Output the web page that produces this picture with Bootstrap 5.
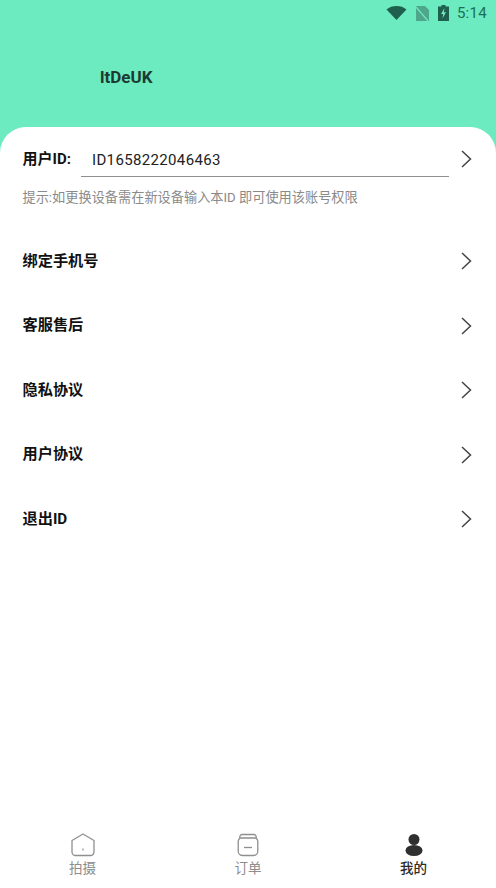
<!DOCTYPE html>
<html lang="zh">
<head>
<meta charset="utf-8">
<link href="https://cdn.jsdelivr.net/npm/bootstrap@5.3.0/dist/css/bootstrap.min.css" rel="stylesheet">
<style>
html,body{height:100%}
body{background:#6cebc0;font-family:"Roboto","Noto Sans CJK SC",sans-serif;color:#111;overflow:hidden}
.phone{height:888px}
.statusrow{height:26px;padding-right:9px;gap:9px;color:#1d6f58;font-size:15px;letter-spacing:.3px}
.statusrow svg{display:block}
.statusrow .batt{margin-right:-1px}
.hero{height:101px;padding-left:100px;padding-top:40px;font-size:17px;font-weight:700;line-height:22px;color:#1d3b33}
.sheet{background:#fff;border-radius:26px 26px 0 0;flex:1 1 auto;min-height:0}
.uidrow{padding:18px 24px 0 22.500px;height:51px}
.uidlabel{font-size:15px;font-weight:700;width:58.500px;line-height:28px;white-space:nowrap}
.uidval{flex:1;border-bottom:1px solid #8f8f8f;font-size:15px;line-height:22px;padding:0 0 6px 11px;height:28px;margin-right:12px;letter-spacing:.35px;color:#222;margin-top:4px}
.chev{margin-top:5px}
.hint{padding:11px 0 0 22.500px;font-size:13.200px;line-height:18px;color:#8a8a8a;height:51px}
.menurow{height:64.500px;padding:0 24px 0 22.500px;font-size:15.200px;font-weight:700;color:#111}
.tabbar{height:55px}
.tabitem{width:165px;font-size:13.500px;line-height:17px;color:#8d8d8d;gap:3px}
.tabitem.on{color:#2b2b2b;font-weight:500}
</style>
</head>
<body>
<div class="phone d-flex flex-column">
  <div class="statusrow d-flex justify-content-end align-items-center">
    <svg width="21" height="14" viewBox="0 0 20 14"><path d="M0 3.500C3 1 6 0 10 0s7 1 10 3.500L10 14z" fill="#1f5f4e"/></svg>
    <svg width="13" height="15" viewBox="0 0 13 15"><path d="M0 0h9l4 4v11H0z" fill="#4fa78b"/><path d="M0 1l12 14" stroke="#6cebc0" stroke-width="1.200"/></svg>
    <svg class="batt" width="11" height="16" viewBox="0 0 11 16"><path d="M3.500 0h4v1.500H11V16H0V1.500h3.500z" fill="#1f5f4e"/><path d="M6.500 3L3 9h2.200L4.500 13.500 8 7.300H5.800z" fill="#6cebc0"/></svg>
    <span>5:14</span>
  </div>
  <div class="hero">ltDeUK</div>
  <div class="sheet d-flex flex-column">
    <div class="uidrow d-flex align-items-start">
      <div class="uidlabel">用户ID:</div>
      <div class="uidval">ID1658222046463</div>
      <svg class="chev" width="11" height="18" viewBox="0 0 11 18"><path d="M1 1l8.500 8L1 17" fill="none" stroke="#444" stroke-width="1.500"/></svg>
    </div>
    <div class="hint">提示:如更换设备需在新设备输入本ID 即可使用该账号权限</div>
    <div class="menurow d-flex justify-content-between align-items-center"><span>绑定手机号</span><svg width="11" height="18" viewBox="0 0 11 18"><path d="M1 1l8.500 8L1 17" fill="none" stroke="#444" stroke-width="1.500"/></svg></div>
    <div class="menurow d-flex justify-content-between align-items-center"><span>客服售后</span><svg width="11" height="18" viewBox="0 0 11 18"><path d="M1 1l8.500 8L1 17" fill="none" stroke="#444" stroke-width="1.500"/></svg></div>
    <div class="menurow d-flex justify-content-between align-items-center"><span>隐私协议</span><svg width="11" height="18" viewBox="0 0 11 18"><path d="M1 1l8.500 8L1 17" fill="none" stroke="#444" stroke-width="1.500"/></svg></div>
    <div class="menurow d-flex justify-content-between align-items-center"><span>用户协议</span><svg width="11" height="18" viewBox="0 0 11 18"><path d="M1 1l8.500 8L1 17" fill="none" stroke="#444" stroke-width="1.500"/></svg></div>
    <div class="menurow d-flex justify-content-between align-items-center"><span>退出ID</span><svg width="11" height="18" viewBox="0 0 11 18"><path d="M1 1l8.500 8L1 17" fill="none" stroke="#444" stroke-width="1.500"/></svg></div>
    <div class="flex-grow-1"></div>
    <div class="tabbar d-flex justify-content-between align-items-start">
      <div class="tabitem d-flex flex-column align-items-center">
        <svg width="26" height="24" viewBox="0 0 26 24"><path d="M13 1L24 7.500V19a3.500 3.500 0 0 1-3.500 3.500h-15A3.500 3.500 0 0 1 2 19V7.500z" fill="none" stroke="#8f8f8f" stroke-width="1.300" stroke-linejoin="round"/><path d="M13 15.500v2" stroke="#8f8f8f" stroke-width="1.200"/></svg>
        <span>拍摄</span>
      </div>
      <div class="tabitem d-flex flex-column align-items-center">
        <svg width="24" height="24" viewBox="0 0 24 24"><path d="M6 1.500h12a2.500 2.500 0 0 1 2 3.500c1.200 1 1.800 2 1.800 3.500V18a4.500 4.500 0 0 1-4.500 4.500H6.700A4.500 4.500 0 0 1 2.200 18V8.500C2.200 7 2.800 6 4 5a2.500 2.500 0 0 1 2-3.500zM4 5h16" fill="none" stroke="#8f8f8f" stroke-width="1.300"/><path d="M8 14.500h8" stroke="#8f8f8f" stroke-width="1.300"/></svg>
        <span>订单</span>
      </div>
      <div class="tabitem on d-flex flex-column align-items-center">
        <svg width="24" height="24" viewBox="0 0 24 24"><circle cx="12" cy="6.500" r="5.500" fill="#2f2f2f"/><ellipse cx="12" cy="17.500" rx="8.500" ry="5.500" fill="#2f2f2f"/></svg>
        <span>我的</span>
      </div>
    </div>
  </div>
</div>
<script src="https://cdn.jsdelivr.net/npm/bootstrap@5.3.0/dist/js/bootstrap.bundle.min.js"></script>
</body>
</html>
